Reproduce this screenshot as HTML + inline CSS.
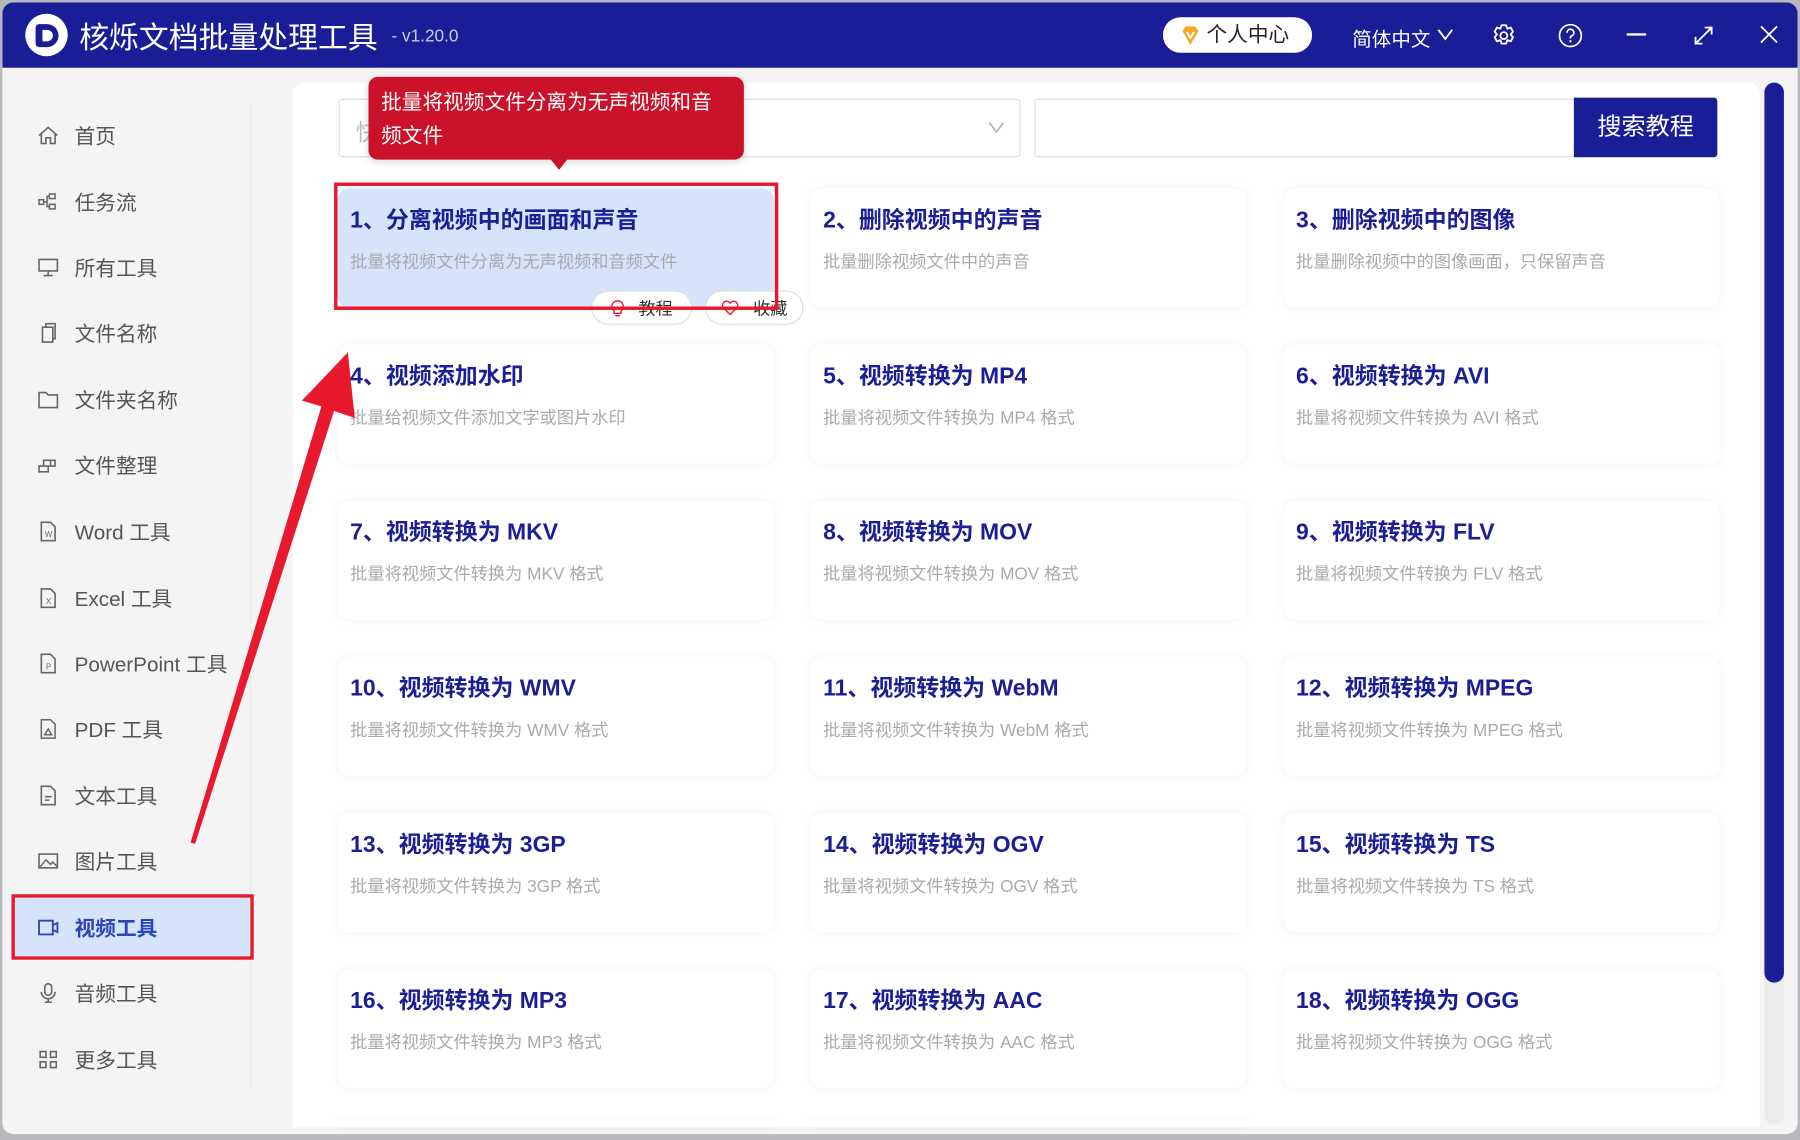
<!DOCTYPE html>
<html><head><meta charset="utf-8"><style>
*{margin:0;padding:0;box-sizing:border-box}
html,body{width:1800px;height:1140px;overflow:hidden;background:#b8b8bc}
#w{width:1568px;height:993px;transform:scale(1.147959);transform-origin:0 0;position:relative;font-family:"Liberation Sans","Noto Sans CJK SC",sans-serif}
.win{position:absolute;left:2px;top:2px;width:1564px;height:986px;background:#f4f4f4;border-radius:10px;overflow:hidden}
.hd{position:absolute;left:0;top:0;width:1564px;height:57px;background:#191e96}
.abs{position:absolute}
.menu{position:absolute;left:32px;font-size:18px;color:#555;display:flex;align-items:center}
.menu svg{width:20px;height:20px;margin-right:13px}
.card{position:absolute;width:380px;height:104px;background:#fff;border-radius:10px;box-shadow:0 0 8px rgba(0,0,0,.05)}
.card b{position:absolute;left:11px;top:11px;font-size:20px;color:#1a1f96;font-weight:bold;white-space:nowrap}
.card i{position:absolute;left:11px;top:53px;font-size:15px;color:#aaa;font-style:normal;white-space:nowrap}
.pill{position:absolute;top:253px;height:30px;background:#fff;border:1px solid #ddd;border-radius:15px;font-size:15px;color:#333;display:flex;align-items:center;justify-content:center;gap:12px}
</style></head><body><div id="w">
<div class="win">
<div class="hd">
 <div class="abs" style="left:20px;top:10px;width:37px;height:37px;border-radius:50%;background:#fff"></div>
 <div class="abs" style="left:29px;top:19px;width:20px;height:20px;border:5px solid #191e96;border-left-width:6px;border-radius:3px 10px 10px 3px"></div>
 <div class="abs" style="left:67px;top:11px;font-size:26px;color:#fff">核烁文档批量处理工具</div>
 <div class="abs" style="left:339px;top:21px;font-size:15px;color:#c8cae8">- v1.20.0</div>
 <div class="abs" style="left:1011px;top:13px;width:130px;height:31px;background:#fff;border-radius:16px;font-size:18px;color:#222;padding-left:38px;line-height:31px">个人中心</div>
 <svg class="abs" style="left:1026px;top:20px" width="18" height="18" viewBox="0 0 18 18"><path d="M2 5 L5 1 H13 L16 5 L9 17 Z" fill="#f5a623"/><path d="M6 6 L9 11 L12 6" stroke="#fff" stroke-width="1.8" fill="none"/></svg>
 <div class="abs" style="left:1176px;top:18px;font-size:17px;color:#fff">简体中文</div>
 <svg class="abs" style="left:1250px;top:22px" width="14" height="12"><path d="M1 2 L7 10 L13 2" stroke="#fff" stroke-width="1.6" fill="none"/></svg>
 <svg class="abs" style="left:1297px;top:18px" width="22" height="22" viewBox="0 0 22 22"><path d="M9 2h4l1 3 3-1 2 3.5-2 2.5 2 2.5-2 3.5-3-1-1 3h-4l-1-3-3 1-2-3.5 2-2.5-2-2.5 2-3.5 3 1z" stroke="#fff" stroke-width="1.6" fill="none" stroke-linejoin="round"/><circle cx="11" cy="11" r="3" stroke="#fff" stroke-width="1.6" fill="none"/></svg>
 <svg class="abs" style="left:1355px;top:18px" width="22" height="22" viewBox="0 0 22 22"><circle cx="11" cy="11" r="9.5" stroke="#fff" stroke-width="1.5" fill="none"/><path d="M8 8.5a3 3 0 1 1 4 2.8c-1 .4-1 1-1 2.2" stroke="#fff" stroke-width="1.5" fill="none"/><circle cx="11" cy="16" r="1" fill="#fff"/></svg>
 <div class="abs" style="left:1415px;top:27px;width:17px;height:2px;background:#fff"></div>
 <svg class="abs" style="left:1472px;top:19px" width="20" height="20"><path d="M3 17 L17 3 M11 3h6v6 M3 11v6h6" stroke="#fff" stroke-width="1.6" fill="none"/></svg>
 <svg class="abs" style="left:1530px;top:19px" width="18" height="18"><path d="M2 2 L16 16 M16 2 L2 16" stroke="#fff" stroke-width="1.6"/></svg>
</div>
</div>
<div class="abs" style="left:218px;top:90px;width:1px;height:860px;background:#ebebeb"></div>
<!-- sidebar -->
<div class="menu" style="top:105px"><svg viewBox="0 0 20 20"><path d="M2 10 L10 3 L18 10 M4 8.5V17h4v-5h4v5h4V8.5" stroke="#666" stroke-width="1.4" fill="none"/></svg>首页</div>
<div class="menu" style="top:163px"><svg viewBox="0 0 20 20"><rect x="2" y="8" width="4" height="4" stroke="#666" fill="none" stroke-width="1.3"/><rect x="11" y="3" width="5" height="4" stroke="#666" fill="none" stroke-width="1.3"/><rect x="11" y="12" width="5" height="4" stroke="#666" fill="none" stroke-width="1.3"/><path d="M6 10h3V5h2M9 10v4h2" stroke="#666" fill="none" stroke-width="1.3"/></svg>任务流</div>
<div class="menu" style="top:220px"><svg viewBox="0 0 20 20"><rect x="2" y="3" width="16" height="10" stroke="#666" fill="none" stroke-width="1.4"/><path d="M10 13v4M6 17h8" stroke="#666" stroke-width="1.4"/></svg>所有工具</div>
<div class="menu" style="top:277px"><svg viewBox="0 0 20 20"><path d="M5 5h9v13H5z M8 5V2h8v13h-2" stroke="#666" fill="none" stroke-width="1.4"/></svg>文件名称</div>
<div class="menu" style="top:335px"><svg viewBox="0 0 20 20"><path d="M2 4h6l2 2h8v11H2z" stroke="#666" fill="none" stroke-width="1.4"/></svg>文件夹名称</div>
<div class="menu" style="top:392px"><svg viewBox="0 0 20 20"><path d="M2 11h8v5H2z M6 11V6h6v5 M10 6h6v5h-6" stroke="#666" fill="none" stroke-width="1.4"/></svg>文件整理</div>
<div class="menu" style="top:450px"><svg viewBox="0 0 20 20"><path d="M4 2h8l4 4v12H4z" stroke="#666" fill="none" stroke-width="1.4"/><text x="7" y="15" font-size="7" fill="#666">W</text></svg>Word 工具</div>
<div class="menu" style="top:508px"><svg viewBox="0 0 20 20"><path d="M4 2h8l4 4v12H4z" stroke="#666" fill="none" stroke-width="1.4"/><text x="8" y="15" font-size="7" fill="#666">X</text></svg>Excel 工具</div>
<div class="menu" style="top:565px"><svg viewBox="0 0 20 20"><path d="M4 2h8l4 4v12H4z" stroke="#666" fill="none" stroke-width="1.4"/><text x="8" y="15" font-size="7" fill="#666">P</text></svg>PowerPoint 工具</div>
<div class="menu" style="top:622px"><svg viewBox="0 0 20 20"><path d="M4 2h8l4 4v12H4z M7 15l3-5 3 5z" stroke="#666" fill="none" stroke-width="1.3"/></svg>PDF 工具</div>
<div class="menu" style="top:680px"><svg viewBox="0 0 20 20"><path d="M4 2h8l4 4v12H4z M7 11h6M7 14h4" stroke="#666" fill="none" stroke-width="1.4"/></svg>文本工具</div>
<div class="menu" style="top:737px"><svg viewBox="0 0 20 20"><rect x="2" y="4" width="16" height="12" stroke="#666" fill="none" stroke-width="1.4"/><path d="M3 15l5-6 4 4 2-2 4 4" stroke="#666" fill="none" stroke-width="1.3"/></svg>图片工具</div>
<div class="abs" style="left:10px;top:779px;width:211px;height:57px;border:3px solid #e8192c"></div>
<div class="abs" style="left:13px;top:782px;width:205px;height:51px;background:#d5e3fb;border-radius:4px"></div>
<div class="menu" style="top:795px;color:#2b45b8;font-weight:bold"><svg viewBox="0 0 20 20"><rect x="2" y="4" width="12" height="12" stroke="#2b45b8" fill="none" stroke-width="1.6"/><path d="M14 8l4-2v8l-4-2" stroke="#2b45b8" fill="none" stroke-width="1.6"/></svg>视频工具</div>
<div class="menu" style="top:852px"><svg viewBox="0 0 20 20"><rect x="7" y="2" width="6" height="10" rx="3" stroke="#666" fill="none" stroke-width="1.4"/><path d="M4 9a6 6 0 0 0 12 0M10 15v3M7 18h6" stroke="#666" fill="none" stroke-width="1.4"/></svg>音频工具</div>
<div class="menu" style="top:910px"><svg viewBox="0 0 20 20"><path d="M3 3h5v5H3zM12 3h5v5h-5zM3 12h5v5H3zM12 12h5v5h-5z" stroke="#666" fill="none" stroke-width="1.4"/></svg>更多工具</div>
<!-- content -->
<div class="abs" style="left:255px;top:72px;width:1278px;height:910px;background:#fff;border-radius:10px 10px 0 0"></div>
<div class="abs" style="left:295px;top:86px;width:594px;height:51px;border:1px solid #ddd;border-radius:3px;font-size:20px;color:#bbb;padding:12px 14px">快</div>
<svg class="abs" style="left:861px;top:105px" width="14" height="12"><path d="M1 2 L7 10 L13 2" stroke="#aaa" stroke-width="1.3" fill="none"/></svg>
<div class="abs" style="left:901px;top:86px;width:472px;height:51px;border:1px solid #ddd;border-radius:3px 0 0 3px"></div>
<div class="abs" style="left:1371px;top:85px;width:125px;height:52px;background:#191e96;color:#fff;font-size:21px;text-align:center;line-height:52px;border-radius:0 3px 3px 0">搜索教程</div>
<div class="abs" style="left:1537px;top:72px;width:17px;height:908px;background:#ebebeb;border-radius:9px"></div>
<div class="abs" style="left:1537px;top:72px;width:17px;height:784px;background:#191e96;border-radius:9px"></div>

<div class="card" style="left:294px;top:164px;background:#d5e3fb"><b>1、分离视频中的画面和声音</b><i>批量将视频文件分离为无声视频和音频文件</i></div>
<div class="card" style="left:706px;top:164px"><b>2、删除视频中的声音</b><i>批量删除视频文件中的声音</i></div>
<div class="card" style="left:1118px;top:164px"><b>3、删除视频中的图像</b><i>批量删除视频中的图像画面，只保留声音</i></div>
<div class="card" style="left:294px;top:300px"><b>4、视频添加水印</b><i>批量给视频文件添加文字或图片水印</i></div>
<div class="card" style="left:706px;top:300px"><b>5、视频转换为 MP4</b><i>批量将视频文件转换为 MP4 格式</i></div>
<div class="card" style="left:1118px;top:300px"><b>6、视频转换为 AVI</b><i>批量将视频文件转换为 AVI 格式</i></div>
<div class="card" style="left:294px;top:436px"><b>7、视频转换为 MKV</b><i>批量将视频文件转换为 MKV 格式</i></div>
<div class="card" style="left:706px;top:436px"><b>8、视频转换为 MOV</b><i>批量将视频文件转换为 MOV 格式</i></div>
<div class="card" style="left:1118px;top:436px"><b>9、视频转换为 FLV</b><i>批量将视频文件转换为 FLV 格式</i></div>
<div class="card" style="left:294px;top:572px"><b>10、视频转换为 WMV</b><i>批量将视频文件转换为 WMV 格式</i></div>
<div class="card" style="left:706px;top:572px"><b>11、视频转换为 WebM</b><i>批量将视频文件转换为 WebM 格式</i></div>
<div class="card" style="left:1118px;top:572px"><b>12、视频转换为 MPEG</b><i>批量将视频文件转换为 MPEG 格式</i></div>
<div class="card" style="left:294px;top:708px"><b>13、视频转换为 3GP</b><i>批量将视频文件转换为 3GP 格式</i></div>
<div class="card" style="left:706px;top:708px"><b>14、视频转换为 OGV</b><i>批量将视频文件转换为 OGV 格式</i></div>
<div class="card" style="left:1118px;top:708px"><b>15、视频转换为 TS</b><i>批量将视频文件转换为 TS 格式</i></div>
<div class="card" style="left:294px;top:844px"><b>16、视频转换为 MP3</b><i>批量将视频文件转换为 MP3 格式</i></div>
<div class="card" style="left:706px;top:844px"><b>17、视频转换为 AAC</b><i>批量将视频文件转换为 AAC 格式</i></div>
<div class="card" style="left:1118px;top:844px"><b>18、视频转换为 OGG</b><i>批量将视频文件转换为 OGG 格式</i></div>
<div class="abs" style="left:294px;top:976px;width:380px;height:6px;background:#fff;box-shadow:0 0 6px rgba(0,0,0,.05)"></div>
<div class="abs" style="left:706px;top:976px;width:380px;height:6px;background:#fff;box-shadow:0 0 6px rgba(0,0,0,.05)"></div>

<div class="pill" style="left:515px;width:88px"><svg width="12" height="15"><path d="M6 1a5 5 0 0 0-3 9v2h6v-2a5 5 0 0 0-3-9zM4 14h4" stroke="#e8192c" fill="none" stroke-width="1.2"/></svg>教程</div>
<div class="pill" style="left:614px;width:86px"><svg width="16" height="14"><path d="M8 13 L2 7 A3 3 0 0 1 8 3 A3 3 0 0 1 14 7 Z" stroke="#e8192c" fill="none" stroke-width="1.2"/></svg>收藏</div>
<div class="abs" style="left:291px;top:159px;width:387px;height:111px;border:3px solid #e8192c"></div>

<div class="abs" style="left:321px;top:67px;width:327px;height:72px;background:#cc1229;border-radius:8px;color:#fff;font-size:18px;line-height:29px;padding:8px 11px;box-shadow:0 2px 8px rgba(0,0,0,.15)">批量将视频文件分离为无声视频和音频文件</div>
<div class="abs" style="left:479px;top:138px;width:0;height:0;border-left:8px solid transparent;border-right:8px solid transparent;border-top:10px solid #cc1229"></div>

<svg class="abs" style="left:0;top:0" width="1568" height="993"><polygon points="166,734 170,735 291,358 309,364 303,307 263,349 280,354" fill="#e8192c"/></svg>
</div></body></html>
